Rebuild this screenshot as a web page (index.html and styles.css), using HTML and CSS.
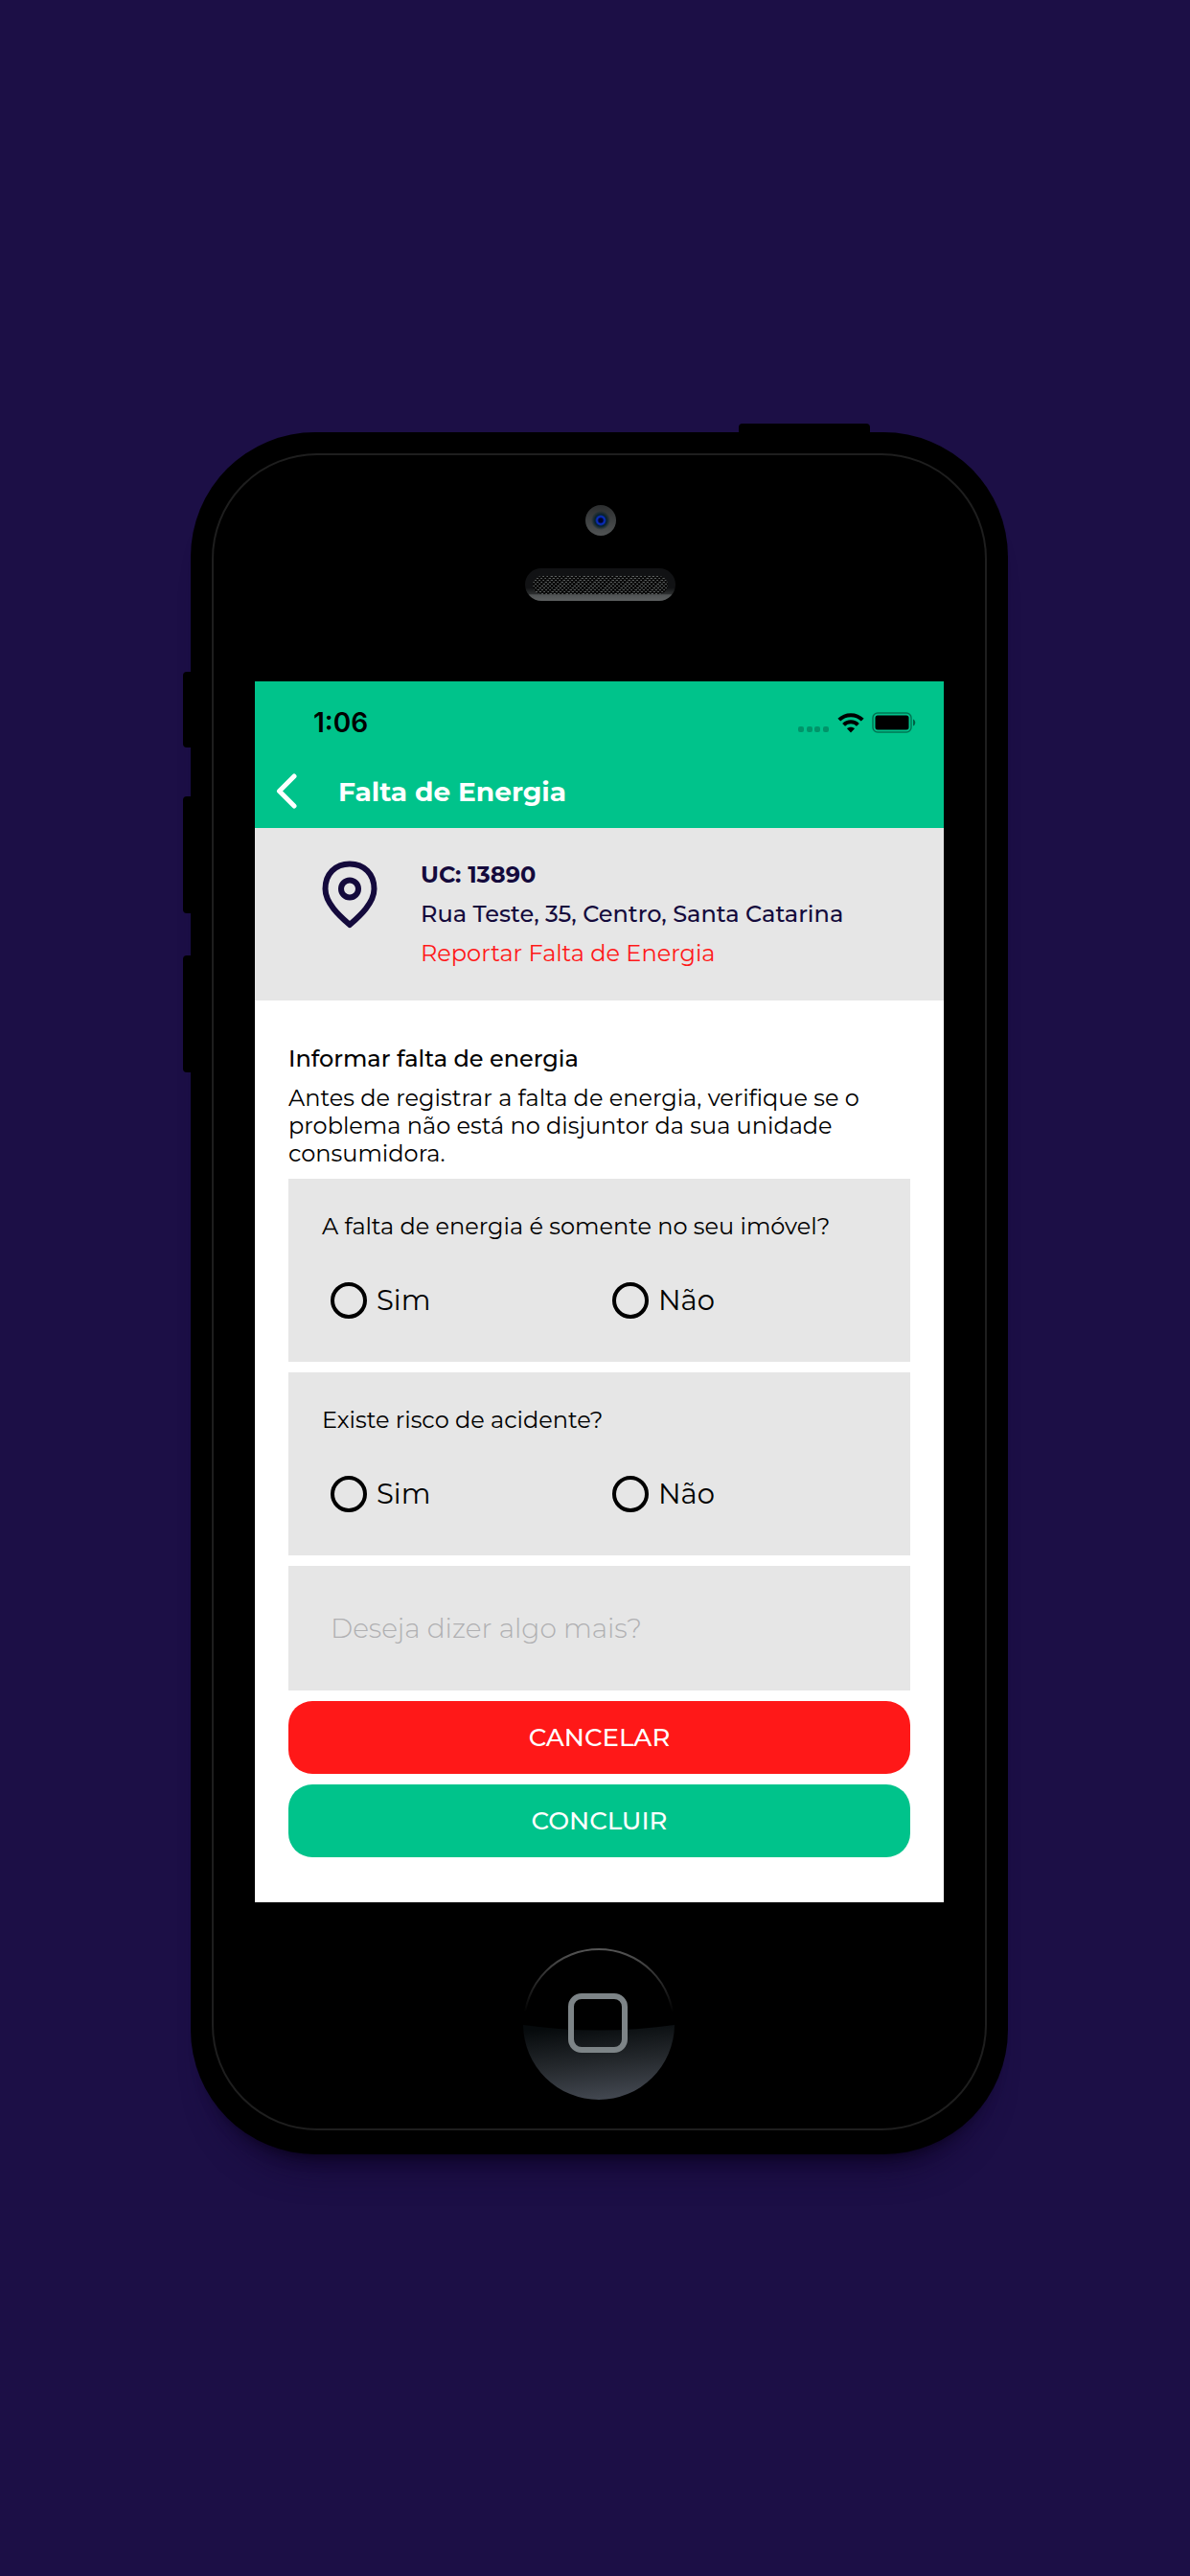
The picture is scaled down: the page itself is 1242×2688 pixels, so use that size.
FILE: index.html
```html
<!DOCTYPE html>
<html lang="pt-BR">
<head>
  <meta charset="utf-8">
  <meta name="viewport" content="width=device-width, initial-scale=1">
  <title>Falta de Energia</title>
  <link rel="stylesheet" href="styles.css">
</head>
<body>
  <main class="stage">
    <div class="phone">
      <span class="key key-power"></span>
      <span class="key key-mute"></span>
      <span class="key key-up"></span>
      <span class="key key-down"></span>
      <div class="bezel">
        <div class="camera"></div>
        <div class="speaker"><div class="grille"></div></div>

        <div class="screen">
          <header class="top">
            <div class="status">
              <time>1:06</time>
              <div class="indicators">
                <svg width="33" height="7" viewBox="0 0 33 7" aria-hidden="true"><g fill="#000" fill-opacity=".24"><rect width="6" height="6" rx="2"/><rect x="9" width="6" height="6" rx="2"/><rect x="17" width="6" height="6" rx="2"/><rect x="26" width="6" height="6" rx="2"/></g></svg>
                <svg width="28" height="21" viewBox="0 0 28 21" aria-hidden="true"><g fill="none" stroke="#000" stroke-width="4"><path d="M1.8 7.2C8.4.5 19.6.5 26.2 7.2"/><path d="M6.6 12.3c4-4 10.8-4 14.8 0"/></g><path d="M14 20.5l-4-4.2c2.2-2 5.8-2 8 0z"/></svg>
                <svg width="47" height="22" viewBox="0 0 47 22" aria-hidden="true"><rect x="1" y="1" width="40" height="20" rx="5" fill="none" stroke="#000" stroke-opacity=".4" stroke-width="1.500"/><rect x="3.500" y="3.500" width="35" height="15" rx="2.500"/><path d="M43 7.500c3 1 3 6 0 7z" fill-opacity=".5"/></svg>
              </div>
            </div>
            <div class="bar">
              <button class="back" type="button" aria-label="Voltar">
                <svg width="22" height="37" viewBox="0 0 22 37" aria-hidden="true"><path d="M19 3L3.500 18.500L19 34" fill="none" stroke="#fff" stroke-width="5" stroke-linecap="round" stroke-linejoin="round"/></svg>
              </button>
              <h1>Falta de Energia</h1>
            </div>
          </header>

          <section class="place">
            <svg class="pin" width="58" height="71" viewBox="0 0 58 71" fill="none" stroke="#140a3c" stroke-width="6" stroke-linejoin="round" aria-hidden="true"><path d="M29 67C20 59 3.500 45 3.500 29.500C3.500 14 14 3.500 29 3.500S54.500 14 54.500 29.500C54.500 45 38 59 29 67Z"/><circle cx="29" cy="29.500" r="9"/></svg>
            <div class="place-text">
              <p class="unit">UC: 13890</p>
              <p class="address">Rua Teste, 35, Centro, Santa Catarina</p>
              <p class="alert">Reportar Falta de Energia</p>
            </div>
          </section>

          <form class="report">
            <div class="intro">
              <h2>Informar falta de energia</h2>
              <p>Antes de registrar a falta de energia, verifique se o problema não está no disjuntor da sua unidade consumidora.</p>
            </div>
            <div class="card" role="radiogroup" aria-labelledby="q1">
              <p id="q1">A falta de energia é somente no seu imóvel?</p>
              <div class="options">
                <label><input type="radio" name="imovel" value="sim">Sim</label>
                <label><input type="radio" name="imovel" value="nao">Não</label>
              </div>
            </div>
            <div class="card" role="radiogroup" aria-labelledby="q2">
              <p id="q2">Existe risco de acidente?</p>
              <div class="options">
                <label><input type="radio" name="risco" value="sim">Sim</label>
                <label><input type="radio" name="risco" value="nao">Não</label>
              </div>
            </div>
            <input class="note" type="text" placeholder="Deseja dizer algo mais?" aria-label="Deseja dizer algo mais?">
            <button class="action cancel" type="button">CANCELAR</button>
            <button class="action confirm" type="submit">CONCLUIR</button>
          </form>
        </div>

        <div class="home">
          <svg width="158" height="158" viewBox="0 0 158 158" aria-hidden="true">
            <defs>
              <linearGradient id="gloss" x1="0.400" y1="0" x2="0.600" y2="1"><stop offset="0" stop-color="#060a0c"/><stop offset=".5" stop-color="#24282c"/><stop offset="1" stop-color="#444952"/></linearGradient>
              <linearGradient id="rim" x1="0" y1="0" x2="0" y2="1"><stop offset="0" stop-color="#555"/><stop offset=".42" stop-color="#000"/></linearGradient>
            </defs>
            <circle cx="79" cy="79" r="78" fill="#000" stroke="url(#rim)" stroke-width="2"/>
            <path d="M0 80Q79 91 158 80A79 79 0 0 1 79 158A79 79 0 0 1 0 80Z" fill="url(#gloss)"/>
            <rect x="50" y="50" width="56" height="56" rx="11" fill="none" stroke="#7d8487" stroke-width="6"/>
          </svg>
        </div>
      </div>
    </div>
  </main>
</body>
</html>
```
FILE: styles.css
```css
* {
  box-sizing: border-box;
}

body,
h1,
h2,
p {
  margin: 0;
}

body {
  background: #1c0f46;
  color: #000;
  font-family: "Montserrat", "Inter", sans-serif;
  font-size: 24px;
}

button,
input {
  font: inherit;
}

.stage {
  display: flex;
  align-items: center;
  justify-content: center;
  min-height: 100vh;
  padding: 11px 16px 0 25px;
}

/* Device frame */
.phone {
  position: relative;
  width: 100%;
  max-width: 853px;
  padding: 22px 22px 25px;
  border-radius: 130px;
  background: #000;
  box-shadow: 0 16px 16px -16px #080218, 0 40px 36px -30px #12062f;
}

.key {
  position: absolute;
  left: -8px;
  width: 16px;
  height: 122px;
  border-radius: 4px;
  background: #000;
}

.key-power {
  top: -9px;
  right: 144px;
  left: auto;
  width: 137px;
  height: 20px;
}

.key-mute {
  top: 250px;
  height: 79px;
}

.key-up {
  top: 380px;
}

.key-down {
  top: 546px;
}

.bezel {
  display: flex;
  flex-direction: column;
  align-items: center;
  padding: 52px 43px 30px;
  border: 2px solid #1e1e1e;
  border-radius: 110px;
}

.camera {
  width: 32px;
  height: 32px;
  margin-left: 2px;
  border-radius: 50%;
  background:
    radial-gradient(circle, #000428 2px, #0a2fd0 4px, #06202c 6px, transparent 10px),
    linear-gradient(#2c2e2f, #505354);
}

.speaker {
  width: 157px;
  height: 34px;
  margin: 34px 0 84px 2px;
  padding: 8px;
  border-radius: 17px;
  background: linear-gradient(#111214 60%, #2c2e2f 78%, #505354 82%, #5c5f60);
}

.grille {
  height: 19px;
  border-radius: 10px;
  background:
    repeating-linear-gradient(transparent 0 1px, #0a0a0a 1px 2px),
    repeating-linear-gradient(135deg, #0a0a0a 0 1px, #5c6060 2px 3px);
}

.screen {
  width: 100%;
  background: #fff;
}

/* Header */
.top {
  padding-top: 14px;
  background: #00c38b;
}

.status {
  display: flex;
  align-items: center;
  justify-content: space-between;
  padding: 0 28px 0 61px;
  font-family: "Inter", sans-serif;
  font-size: 28px;
  font-weight: 600;
  line-height: 58px;
}

.indicators {
  display: flex;
  align-items: flex-end;
  gap: 8px;
}

.bar {
  display: flex;
  align-items: center;
  gap: 43px;
  height: 81px;
  padding: 10px 22px 6px;
  color: #fff;
}

.back {
  display: flex;
  padding: 0;
  border: 0;
  background: none;
}

h1 {
  font-size: 28px;
  font-weight: 700;
}

/* Address */
.place {
  display: flex;
  gap: 45px;
  padding: 28px 35px 29px 70px;
  background: #e6e6e6;
  color: #140a3c;
  line-height: 41px;
}

.pin {
  flex: none;
  margin-top: 6px;
}

.unit {
  font-weight: 700;
}

.address {
  font-weight: 500;
}

.alert {
  color: #ff1818;
}

/* Report form */
.report {
  display: flex;
  flex-direction: column;
  gap: 11px;
  padding: 46px 35px 47px;
}

.intro {
  padding-bottom: 1px;
  line-height: 29px;
}

h2 {
  margin-bottom: 12px;
  font-size: 24px;
  font-weight: 500;
}

.card {
  padding: 35px 17px 44px 35px;
  background: #e6e6e6;
  line-height: 29px;
}

.options {
  display: grid;
  grid-template-columns: 1fr 1fr;
  margin-top: 43px;
  padding-left: 9px;
  font-size: 29px;
  line-height: 40px;
}

.options label {
  display: flex;
  align-items: center;
  gap: 10px;
}

.options input {
  width: 38px;
  height: 38px;
  margin: 0;
  border: 4px solid #000;
  border-radius: 50%;
  appearance: none;
}

.options input:checked {
  background: radial-gradient(circle, #000 8px, transparent 9px);
}

.note {
  width: 100%;
  height: 130px;
  padding: 0 44px;
  border: 0;
  border-radius: 0;
  background: #e6e6e6;
  font-size: 28px;
  font-weight: 300;
}

.note::placeholder {
  color: #b0b0b2;
}

.action {
  height: 76px;
  border: 0;
  border-radius: 25px;
  color: #fff;
  font-size: 26px;
  font-weight: 500;
}

.cancel {
  background: #ff1818;
}

.confirm {
  background: #00c38b;
}

.home {
  display: flex;
  margin: 48px 2px 0 0;
}
```
